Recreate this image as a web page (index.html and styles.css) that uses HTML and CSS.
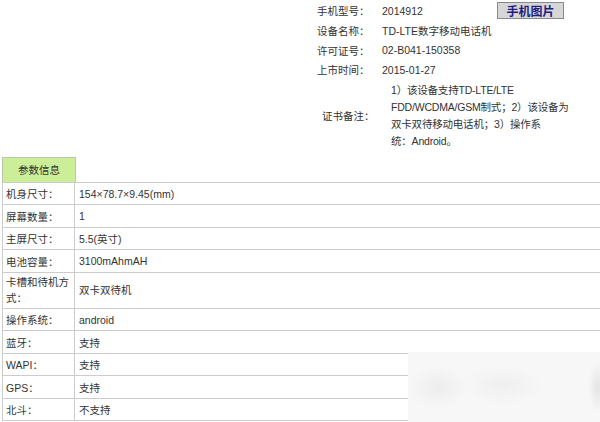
FILE: index.html
```html
<!DOCTYPE html>
<html lang="zh-CN">
<head>
  <meta charset="UTF-8">
  <title>手机参数</title>
  <link rel="stylesheet" href="styles.css">
</head>
<body>
  <div class="info">
    <div class="info-row">
      <span class="info-label">手机型号：</span>
      <span class="info-value">2014912</span>
      <button class="pic-button">手机图片</button>
    </div>
    <div class="info-row">
      <span class="info-label">设备名称：</span>
      <span class="info-value">TD-LTE数字移动电话机</span>
    </div>
    <div class="info-row">
      <span class="info-label">许可证号：</span>
      <span class="info-value">02-B041-150358</span>
    </div>
    <div class="info-row">
      <span class="info-label">上市时间：</span>
      <span class="info-value">2015-01-27</span>
    </div>
    <div class="info-row notes">
      <span class="info-label">证书备注：</span>
      <span class="notes-text">1）该设备支持TD-LTE/LTE<br>FDD/WCDMA/GSM制式；2）该设备为<br>双卡双待移动电话机；3）操作系<br>统：Android。</span>
    </div>
  </div>

  <div class="tab">参数信息</div>
  <table class="params">
    <tr><td class="key">机身尺寸：</td><td>154×78.7×9.45(mm)</td></tr>
    <tr><td class="key">屏幕数量：</td><td>1</td></tr>
    <tr><td class="key">主屏尺寸：</td><td>5.5(英寸)</td></tr>
    <tr><td class="key">电池容量：</td><td>3100mAhmAH</td></tr>
    <tr class="tall"><td class="key">卡槽和待机方式：</td><td>双卡双待机</td></tr>
    <tr><td class="key">操作系统：</td><td>android</td></tr>
    <tr><td class="key">蓝牙：</td><td>支持</td></tr>
    <tr><td class="key">WAPI：</td><td>支持</td></tr>
    <tr><td class="key">GPS：</td><td>支持</td></tr>
    <tr><td class="key">北斗：</td><td>不支持</td></tr>
  </table>

  <div class="watermark"></div>
</body>
</html>
```

FILE: styles.css
```css
body {
  margin: 0;
  background: #ffffff;
  color: #333333;
  font-family: "Liberation Sans", "Noto Sans CJK SC", sans-serif;
  font-size: 10.5px;
  overflow: hidden;
}

.info {
  margin-left: 317px;
  padding-top: 1px;
  width: 260px;
}

.info-row {
  display: flex;
  align-items: center;
  height: 19.7px;
  white-space: nowrap;
}

.info-label {
  width: 65px;
  flex-shrink: 0;
}

.info-value {
  width: 115px;
}

.pic-button {
  height: 17px;
  width: 67px;
  padding: 0;
  margin-top: -1px;
  background: #d6d6d6;
  border: 1px solid #8a8a8a;
  color: #1e1e80;
  font-family: "Noto Sans CJK SC", sans-serif;
  font-size: 12px;
  font-weight: bold;
  line-height: 15px;
}

.notes {
  height: auto;
  margin-top: 2px;
}

.notes .info-label {
  padding-left: 5px;
  width: 69px;
}

.notes-text {
  line-height: 17px;
  letter-spacing: -0.2px;
}

.tab {
  margin: 7px 0 0 2px;
  width: 74px;
  height: 25px;
  line-height: 25px;
  text-align: center;
  background: #ccee99;
  border: 1px solid #b8c8a8;
  border-bottom: none;
  box-sizing: border-box;
}

.params {
  margin-left: 2px;
  width: 598px;
  border-collapse: collapse;
  border-top: 1px solid #cccccc;
  border-left: 1px solid #cccccc;
}

.params td {
  height: 21.5px;
  padding: 0 0 0 4px;
  border-bottom: 1px solid #cccccc;
  vertical-align: middle;
}

.params td.key {
  width: 64.5px;
  padding: 0 3.5px 0 3px;
  border-right: 1px solid #cccccc;
}

.params tr.tall td {
  height: 35px;
  line-height: 16px;
}

.watermark {
  position: absolute;
  left: 408px;
  top: 352px;
  width: 192px;
  height: 70px;
  background:
    radial-gradient(ellipse 30px 22px at 30px 35px, #ededed, rgba(247,247,247,0)),
    radial-gradient(ellipse 40px 20px at 95px 33px, #efefef, rgba(247,247,247,0)),
    radial-gradient(ellipse 10px 25px at 190px 35px, #e4e4e4, rgba(247,247,247,0)),
    #f7f7f7;
}
```
